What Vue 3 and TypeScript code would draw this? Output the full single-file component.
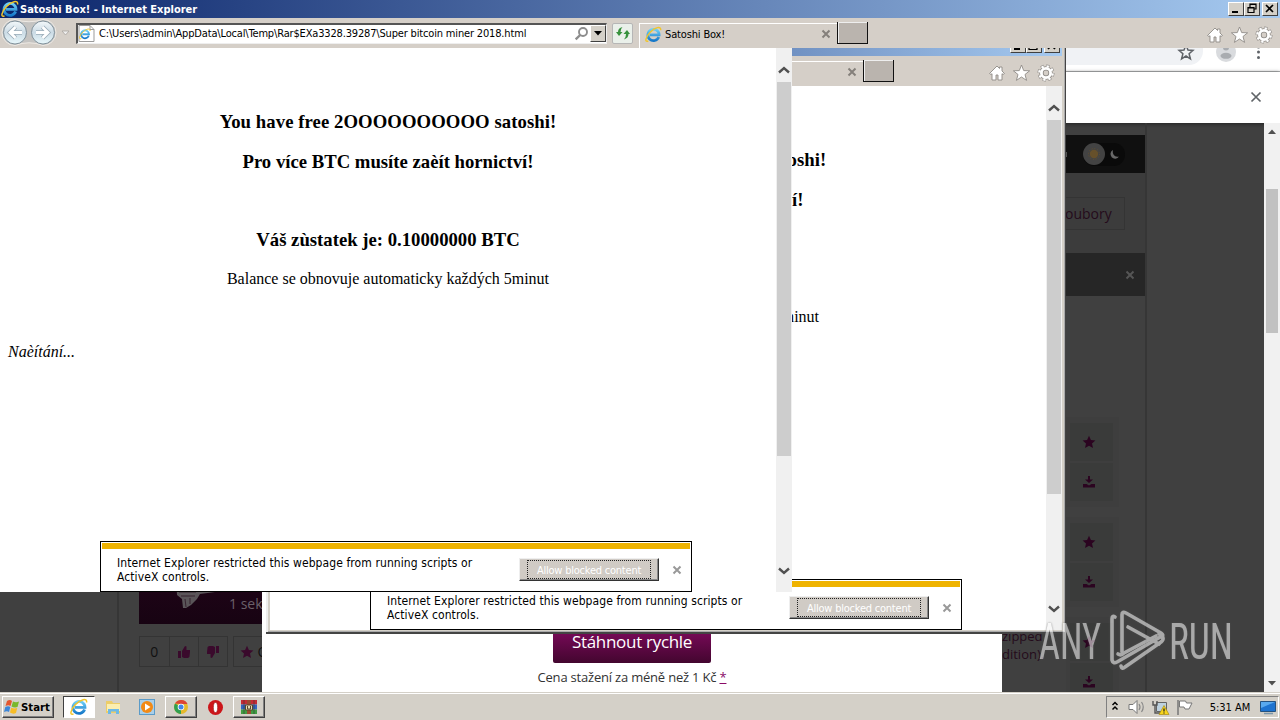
<script setup lang="ts">
interface BrowserWindow {
  id: string
  title: string
  address: string
}

const windows: BrowserWindow[] = [
  { id: 'back', title: '', address: '' },
  {
    id: 'front',
    title: 'Satoshi Box! - Internet Explorer',
    address: 'C:\\Users\\admin\\AppData\\Local\\Temp\\Rar$EXa3328.39287\\Super bitcoin miner 2018.html',
  },
]

const fileRows: number[] = [1, 2, 3]
</script>

<template>
  <div class="desktop">
    <svg class="defs" width="0" height="0">
      <defs>
        <linearGradient id="ieblue" x1="0" y1="0" x2="0" y2="1">
          <stop offset="0" stop-color="#6fd0f7" />
          <stop offset="1" stop-color="#1779c9" />
        </linearGradient>
        <linearGradient id="nav" x1="0" y1="0" x2="0" y2="1">
          <stop offset="0" stop-color="#f4f8fa" />
          <stop offset="0.5" stop-color="#cbdbe5" />
          <stop offset="1" stop-color="#e9f8fc" />
        </linearGradient>
        <symbol id="ie" viewBox="0 0 18 18">
          <path d="M14.6 11.6A6 6 0 1 1 15 9.4H5" fill="none" stroke="url(#ieblue)" stroke-width="2.8" />
          <path d="M3.5 15.8C-.8 18 .6 11.500 5.500 6.500S17.300-.6 16.600 4.500" fill="none" stroke="#f1c52b" stroke-width="1.5" />
        </symbol>
        <symbol id="home" viewBox="0 0 18 18">
          <path d="M1.500 9.500 9 2l2.500 2.500V3h2.500v4l2.500 2.500-1.500 1-1-.8V16h-4v-5H8v5H4V9.700l-1 .8z" fill="#fff" stroke="#8f8b87" stroke-width=".9" />
        </symbol>
        <symbol id="fav" viewBox="0 0 18 18">
          <path d="m9 1 2.200 5.600 5.900.2-4.600 3.700 1.600 5.900L9 13l-5.100 3.400 1.600-5.900L.9 6.800l5.900-.2z" fill="#fff" stroke="#8f8b87" stroke-width=".9" />
        </symbol>
        <symbol id="gear" viewBox="0 0 18 18">
          <circle cx="9" cy="9" r="6.800" fill="none" stroke="#8f8b87" stroke-width="3.400" stroke-dasharray="3.100 2.240" />
          <circle cx="9" cy="9" r="4.600" fill="none" stroke="#8f8b87" stroke-width="4.400" />
          <circle cx="9" cy="9" r="6.700" fill="none" stroke="#fff" stroke-width="2.400" stroke-dasharray="2.300 2.960" stroke-dashoffset="-.4" />
          <circle cx="9" cy="9" r="4.600" fill="none" stroke="#fff" stroke-width="2.800" />
        </symbol>
        <symbol id="star" viewBox="0 0 14 14">
          <path d="m7 .8 1.900 4.200 4.500.5L10 8.500l1 4.500-4-2.300L3 13l1-4.500L.6 5.500 5.100 5z" />
        </symbol>
        <symbol id="download" viewBox="0 0 14 14">
          <path d="M6 1h2v3.500h3L7 8 3 4.500h3zM1 9h3.500L7 10.500 9.500 9H13v3.500H1z" />
        </symbol>
        <symbol id="thumb" viewBox="0 0 14 14">
          <path d="M1 6h3v7H1zM5 6l3-5 1.500.5v3.500H13v2l-.6 5L11 13H7l-2-1z" />
        </symbol>
        <symbol id="cross" viewBox="0 0 10 10">
          <path d="m1.500 1.500 7 7m0-7-7 7" fill="none" stroke="currentColor" stroke-width="2" />
        </symbol>
        <symbol id="chevron" viewBox="0 0 12 8">
          <path d="m1 6.500 5-4.500 5 4.500" fill="none" stroke="#505050" stroke-width="2.400" />
        </symbol>
      </defs>
    </svg>

    <section class="chrome">
      <header class="omni">
        <span class="omni-field"></span>
        <svg class="omni-icons" width="96" height="24" viewBox="0 0 96 24">
          <path d="m16 -3 2 5 5 .4-3.900 3.400 1.300 5L16 8l-4.400 2.800 1.300-5L9 2.400 14 2z" fill="none" stroke="#5f6368" stroke-width="1.500" />
          <circle cx="56" cy="4" r="10" fill="#d9dbde" />
          <circle cx="56" cy="-.5" r="3" fill="#a9acb0" />
          <ellipse cx="56" cy="7.800" rx="5.500" ry="3" fill="#a9acb0" />
          <circle cx="88.500" cy="-1" r="1.500" fill="#5f6368" />
          <circle cx="88.500" cy="4" r="1.500" fill="#5f6368" />
          <circle cx="88.500" cy="9.500" r="1.500" fill="#5f6368" />
        </svg>
      </header>
      <div class="infobar">
        <svg width="12" height="12" viewBox="0 0 12 12"><path d="m1.500 1.500 9 9m0-9-9 9" stroke="#606468" stroke-width="1.700" /></svg>
      </div>
      <div class="viewport">
        <div class="left-col">
          <div class="promo">
            <svg width="50" height="40" viewBox="0 0 50 40"><path d="M2 4h39v14l-15 2-3 5-6 6-5 3H9l-1-9-5-4z" fill="#5a5559" /><path d="M5 18h17m-15 4h14m-10 3 1 8m4-9v6" fill="none" stroke="#35232f" /></svg>
            <span>1 sek</span>
          </div>
          <div class="votes">
            <span class="vote">0</span>
            <span class="vote"><svg width="14" height="14"><use href="#thumb" /></svg></span>
            <span class="vote down"><svg width="14" height="14"><use href="#thumb" /></svg></span>
            <span class="vote fave"><svg width="14" height="14"><use href="#star" /></svg>O</span>
          </div>
        </div>
        <div class="right-col">
          <div class="theme">
            <svg width="79" height="38" viewBox="0 0 79 38">
              <rect x="17" y="8" width="42" height="23" rx="11" fill="#0a0a0a" />
              <path d="M0 17v5" stroke="#555" stroke-width="2" />
              <circle cx="28" cy="19" r="11" fill="#434343" />
              <circle cx="28" cy="19" r="4.200" fill="#66502a" />
              <circle cx="28" cy="19" r="5.400" fill="none" stroke="#66502a" stroke-dasharray="1 1.800" />
              <path d="M47 15a4.600 4.600 0 1 0 6 6.500c-4 1-7-2-6-6.500z" fill="#686868" />
            </svg>
          </div>
          <div class="search"><span>oubory</span></div>
          <div class="banner"><svg width="10" height="10"><use href="#cross" /></svg></div>
          <div class="files">
            <div v-for="row in fileRows" :key="row" class="file">
              <span><svg width="14" height="14"><use href="#star" /></svg></span>
              <span><svg width="14" height="14"><use href="#download" /></svg></span>
            </div>
          </div>
        </div>
        <div class="tail">zipped<br />dition).</div>
        <div class="scroll">
          <svg width="8" height="5"><path d="m0 5 4-4.500L8 5z" fill="#505050" /></svg>
          <i></i>
          <svg width="8" height="5"><path d="m0 0 4 4.500L8 0z" fill="#505050" /></svg>
        </div>
      </div>
      <div class="modal">
        <div class="buy">Stáhnout rychle</div>
        <div class="price"><span>Cena stažení za méně než 1 Kč</span> <b>*</b></div>
      </div>
    </section>

    <section v-for="win in windows" :key="win.id" class="win" :class="win.id">
      <header class="titlebar">
        <svg class="logo" width="18" height="18"><use href="#ie" /></svg>
        <span class="title">{{ win.title }}</span>
        <span class="caption">
          <svg width="12" height="11" viewBox="0 0 12 11"><path d="M3 9h6" stroke="#000" stroke-width="2" /></svg>
        </span>
        <span class="caption">
          <svg v-if="win.id === 'front'" width="12" height="11" viewBox="0 0 12 11"><path d="M5 4V1h6v5H9M5 1.500h6M3 4.500h6v5H3zM3 5h6" fill="none" stroke="#000" stroke-width="1.200" /></svg>
          <svg v-else width="12" height="11" viewBox="0 0 12 11"><path d="M2 1.500h8v8H2zM2 2h8" fill="none" stroke="#000" stroke-width="1.200" /></svg>
        </span>
        <span class="caption close">
          <svg width="12" height="11" viewBox="0 0 12 11"><path d="m3 2 7 7m0-7-7 7" stroke="#000" stroke-width="1.700" /></svg>
        </span>
      </header>
      <div class="toolbar">
        <svg class="nav" width="72" height="30" viewBox="0 0 72 30">
          <path d="M15 1.500Q29 6 43 1.500A13 13 0 0 1 43 27.500Q29 22 15 27.500A13 13 0 0 1 15 1.500" fill="#c5c4c2" stroke="#eeeae5" />
          <circle cx="15" cy="14.500" r="11.500" fill="url(#nav)" stroke="#81919b" />
          <circle cx="43" cy="14.500" r="11.500" fill="url(#nav)" stroke="#81919b" />
          <path d="M22 14.500H10m5.500-5.500L10 14.500l5.500 5.500M36 14.500h12M42.500 9l5.500 5.500-5.500 5.500" fill="none" stroke="#9aacb8" stroke-width="4.400" />
          <path d="M22 14.500H10m5.500-5.500L10 14.500l5.500 5.500M36 14.500h12M42.500 9l5.500 5.500-5.500 5.500" fill="none" stroke="#fff" stroke-width="2.800" />
          <path d="M62 13h7l-3.500 4z" fill="#eee" stroke="#aaa59f" stroke-width=".8" />
        </svg>
        <div class="address">
          <svg width="17" height="17" viewBox="0 0 17 17"><path d="M1 .5h11l4 4v12H1z" fill="#fff" stroke="#9b9b9b" /><path d="M12 .5v4h4" fill="none" stroke="#9b9b9b" /><use href="#ie" x="1" y="3" width="12" height="12" /></svg>
          <span class="url">{{ win.address }}</span>
          <svg class="lens" width="15" height="15" viewBox="0 0 15 15"><circle cx="9" cy="6" r="4" fill="none" stroke="#8d8d8d" stroke-width="1.900" /><path d="m6.200 9-4.500 4.300" stroke="#8d8d8d" stroke-width="2.400" /></svg>
          <span class="drop"><svg width="8" height="5"><path d="M0 0h8L4 4.500z" /></svg></span>
        </div>
        <span class="refresh">
          <svg width="16" height="16" viewBox="0 0 16 16"><path d="M1 7 4 11 7.500 7H5.500q0-3 2-5Q3 3 3 7zM8.500 9 12 5l3 4h-1.500q0 4-4.500 5.500 2-2 2-5.500z" fill="#37923d" /></svg>
        </span>
        <div class="tab">
          <svg width="17" height="17"><use href="#ie" /></svg>
          <span>{{ win.id === 'front' ? 'Satoshi Box!' : '' }}</span>
          <svg class="tab-x" width="10" height="10"><use href="#cross" /></svg>
        </div>
        <span class="newtab"></span>
        <svg class="tools" width="68" height="18" viewBox="0 0 68 18">
          <use href="#home" width="18" height="18" x="0" />
          <use href="#fav" width="18" height="18" x="24.500" />
          <use href="#gear" width="18" height="18" x="49" />
        </svg>
      </div>
      <div class="page">
        <div class="doc">
          <h3 class="offer">You have free 2OOOOOOOOOO satoshi!</h3>
          <h3>Pro více BTC musíte zaèít hornictví!</h3>
          <h3 class="balance">Váš zùstatek je: 0.10000000 BTC</h3>
          <p class="note">Balance se obnovuje automaticky každých 5minut</p>
          <p class="loading">Naèítání...</p>
        </div>
        <div class="bar">
          <svg width="12" height="8"><use href="#chevron" /></svg>
          <i></i>
          <svg class="flip" width="12" height="8"><use href="#chevron" /></svg>
        </div>
        <div class="alert">
          <div class="stripe"></div>
          <div class="alert-row">
            <p>Internet Explorer restricted this webpage from running scripts or<br />ActiveX controls.</p>
            <div class="allow"><span>Allow blocked content</span></div>
            <svg width="10" height="10"><use href="#cross" /></svg>
          </div>
        </div>
      </div>
    </section>

    <footer class="taskbar">
      <div class="start">
        <svg width="16" height="16" viewBox="0 0 16 16">
          <path d="M3 2q3-2 5 0L6.500 7q-2-1.500-5 0z" fill="#e4572e" />
          <path d="M9 2.500q3 1.500 6 0L13.500 8q-3 1-6-.5z" fill="#79b82c" />
          <path d="M1.300 8q3-1.500 5 0L5 13q-2-1.500-5 0z" fill="#3c86d8" />
          <path d="M7.200 8.700q3 1.300 6 .3L12 14q-3 1.500-6-.5z" fill="#f7bd26" />
        </svg>
        <b>Start</b>
      </div>
      <div class="task active"><svg width="18" height="18"><use href="#ie" /></svg></div>
      <div class="task">
        <svg width="18" height="18" viewBox="0 0 18 18"><path d="M2 3h6l1 2h7v10H2z" fill="#eccd68" /><path d="M3 6h13v7H3z" fill="#fbeeb0" /><path d="M4 16v-5h11v5h-3v-2.500H7V16z" fill="#6db9e6" /></svg>
      </div>
      <div class="task">
        <svg width="18" height="18" viewBox="0 0 18 18"><rect x="1.500" y="1.500" width="15" height="15" fill="#a9cfe9" stroke="#5b9bc8" /><circle cx="9" cy="9" r="6" fill="#f28a16" /><path d="m7 5.500 5.500 3.500L7 12.500z" fill="#fff" /></svg>
      </div>
      <div class="task raised">
        <svg width="16" height="16" viewBox="0 0 16 16"><circle cx="8" cy="8" r="7" fill="#e5b92c" /><path d="M8 8 2 4.500A7 7 0 0 0 8 15z" fill="#31a050" /><path d="M2 4.500A7 7 0 0 1 14.500 5H8z" fill="#dc4437" /><circle cx="8" cy="8" r="3.300" fill="#fff" /><circle cx="8" cy="8" r="2.500" fill="#4285e8" /></svg>
      </div>
      <div class="task">
        <svg width="17" height="17" viewBox="0 0 17 17"><circle cx="8.500" cy="8.500" r="7.500" fill="#cc1519" /><ellipse cx="8.500" cy="8.500" rx="2.100" ry="5" fill="#fff" stroke="#8d0a0c" stroke-width=".5" /></svg>
      </div>
      <div class="task raised">
        <svg width="18" height="16" viewBox="0 0 18 16"><path d="M1 1h16v4.500H1z" fill="#c52b34" /><path d="M1 5.500h16v5H1z" fill="#3564bd" /><path d="M1 10.500h16V15H1z" fill="#3f9c42" /><path d="M7 1h4v14H7z" fill="#9c4a31" /><path d="M4 1v14M14 1v14" stroke="#333" stroke-width=".6" /><path d="M5.500 6h7v5h-7z" fill="#e5d9b4" stroke="#59482a" /><path d="M7.500 7v3h3V7" fill="none" stroke="#59482a" /></svg>
      </div>
      <div class="tray">
        <svg width="92" height="20" viewBox="0 0 92 20">
          <path d="m5.500 8 2.500-2.500L10.500 8m-5 4.500L8 10l2.500 2.500" fill="none" stroke="#000" stroke-width="1.500" />
          <path d="M22 7.500h4l4-4v13l-4-4h-4z" fill="#fff" stroke="#777" />
          <path d="M32 7q2 3 0 6M34.500 5q3.500 5 0 10" fill="none" stroke="#888" stroke-width="1.200" />
          <path d="M49.500 5.500h10v9h-10z" fill="#bdd1df" stroke="#636363" /><path d="M46 4v4h4V4M48 8v8h6" fill="none" stroke="#555" stroke-width="1.400" />
          <path d="m57 8.500 5 9H52z" fill="#f8d51b" stroke="#a98b12" stroke-width=".7" /><path d="M57 11.500v3m0 1v1" stroke="#222" stroke-width="1.300" />
          <path d="M71 3v15" stroke="#777" stroke-width="1.500" /><path d="M72.500 4h6l1 2H85l-1.500 3L82 12h-4l-1-2h-4.500z" fill="#fff" stroke="#777" />
        </svg>
        <span class="clock">5:31 AM</span>
        <svg width="16" height="16" viewBox="0 0 16 16"><path d="M.5 2.500h15v10H.5z" fill="#1e73cf" stroke="#25527f" /><path d="M1 3h14L1 9z" fill="#59a9ee" /><path d="M4 14.500h9" stroke="#7b96aa" stroke-width="1.500" /></svg>
      </div>
    </footer>

    <svg class="watermark" width="200" height="70" viewBox="0 0 200 70">
      <g font-family="Roboto, sans-serif" font-size="50" fill="#fff">
        <text x="3" y="54" textLength="62" lengthAdjust="spacingAndGlyphs">ANY</text>
        <text x="133" y="54" textLength="64" lengthAdjust="spacingAndGlyphs">RUN</text>
      </g>
      <g fill="none" stroke="#fff" stroke-width="3.600" stroke-linejoin="round" stroke-linecap="round">
        <path d="M86 47V9.500Q86 6 90 8l35 20q3 2 1 4" />
        <path d="M92 22l31 17M79 12q-3-2-3 2v41q1 4 5 2l45-26" />
        <path d="M123 29q7 4 2 8L89 62q-3 3-4-1M82 49q3 2 6-1l32-17" />
      </g>
    </svg>
  </div>
</template>

<style>
html,
body {
  margin: 0;
  overflow: hidden;
}
</style>

<style scoped>
.desktop {
  position: relative;
  width: 1280px;
  height: 720px;
  overflow: hidden;
  background: #404040;
  font-family: 'DejaVu Sans Condensed', 'DejaVu Sans', sans-serif;
  font-stretch: condensed;
  font-size: 11px;
  color: #000;
}
.desktop * {
  box-sizing: border-box;
}
.defs {
  position: absolute;
}
svg {
  display: block;
  flex: none;
}

/* Background browser */
.chrome {
  position: absolute;
  inset: 0 0 28px 0;
  padding-top: 48px;
  display: flex;
  flex-direction: column;
  font-family: 'Open Sans', 'Noto Sans', sans-serif;
  font-stretch: normal;
}
.omni {
  height: 24px;
  flex: none;
  background: #fff;
  border-bottom: 1px solid #b5b7b9;
  display: flex;
}
.omni-field {
  width: 1203px;
  height: 17px;
  background: #f0f2f5;
  border-radius: 0 0 14px 0;
}
.omni-icons {
  margin-left: -33px;
}
.infobar {
  height: 51px;
  flex: none;
  background: #fff;
  display: flex;
  align-items: center;
  justify-content: flex-end;
  padding: 0 18px 1px 0;
  box-shadow: 0 1px 4px #222;
}
.viewport {
  position: relative;
  flex: 1;
  min-height: 0;
  display: flex;
}
.left-col {
  width: 262px;
  margin-right: 804px;
  flex: none;
  overflow: hidden;
  padding: 437px 0 0 139px;
  background: linear-gradient(90deg, transparent 117px, #363636 117px, #363636 119px, transparent 119px);
}
.promo {
  height: 64px;
  background: linear-gradient(#23051a, #170312);
  display: flex;
  color: #6a6069;
  font-size: 14px;
  white-space: nowrap;
}
.promo svg {
  margin: 14px 5px 0 35px;
}
.promo span {
  padding-top: 34px;
}
.votes {
  display: flex;
  margin-top: 12px;
  width: 180px;
}
.vote {
  width: 29.5px;
  height: 31px;
  border: 1px solid #343434;
  border-right-width: 0;
  display: flex;
  align-items: center;
  justify-content: center;
  font-size: 14px;
  color: #111;
}
.vote svg,
.file svg {
  fill: #2b0420;
}
.vote svg {
  fill: #3a0a2c;
}
.down {
  border-right-width: 1px;
}
.down svg {
  transform: rotate(180deg);
}
.fave {
  width: 70px;
  margin-left: 5px;
  justify-content: flex-start;
  padding-left: 6px;
  gap: 4px;
}
.right-col {
  width: 81px;
  flex: none;
  border-right: 2px solid #363636;
  padding-top: 12px;
}
.theme {
  height: 38px;
  background: #101010;
}
.search {
  height: 80px;
  background: #3c3c3c;
  padding-top: 24px;
}
.search span {
  display: block;
  width: 59px;
  height: 33px;
  border: 1px solid #343434;
  border-left: 0;
  font-size: 14px;
  line-height: 32px;
  color: #240b1b;
  text-indent: -1px;
}
.banner {
  height: 43px;
  background: #262626;
  color: #555;
  display: flex;
  align-items: center;
  justify-content: flex-end;
  padding-right: 10px;
}
.files {
  height: 396px;
  overflow: hidden;
  padding-top: 121px;
}
.file {
  height: 90px;
  width: 53px;
  margin-bottom: 10px;
  background: #3e3e3e;
  padding: 6px 0 0 4px;
  display: flex;
  flex-direction: column;
  gap: 2px;
}
.file span {
  width: 43px;
  height: 38px;
  background: #3a3b3a;
  display: flex;
  align-items: center;
  justify-content: center;
}
.file span svg {
  margin-right: 5px;
}
.tail {
  position: absolute;
  left: 1002px;
  top: 504px;
  font-size: 13px;
  line-height: 18px;
  color: #240b1b;
}
.scroll {
  width: 16px;
  margin-left: auto;
  background: #f1f1f1;
  display: flex;
  flex-direction: column;
  align-items: center;
  padding: 6px 0;
}
.scroll i {
  width: 12px;
  height: 144px;
  margin: 55px 0 auto;
  background: #c1c1c1;
}
.modal {
  position: absolute;
  left: 262px;
  top: 560px;
  width: 740px;
  height: 132px;
  background: #fff;
  display: flex;
  flex-direction: column;
  align-items: center;
  color: #333;
}
.buy {
  width: 158px;
  height: 43px;
  margin-top: 60px;
  border-radius: 2px;
  background: linear-gradient(#8b0a67, #43062f);
  color: #fff;
  font-size: 17px;
  letter-spacing: -0.3px;
  line-height: 44px;
  text-align: center;
  white-space: nowrap;
}
.price {
  font-size: 13px;
  line-height: 18px;
  margin-top: 5px;
  letter-spacing: -0.2px;
}
.price b {
  color: #8a0a67;
  font-weight: normal;
  text-decoration: underline;
}

/* Explorer windows */
.win {
  position: absolute;
  display: flex;
  flex-direction: column;
}
.front {
  left: 0;
  top: 0;
  width: 1280px;
}
.back {
  left: 266px;
  top: 38px;
  width: 800px;
  height: 596px;
  background: #d4d0c8;
  border: solid #444;
  border-width: 0 1px 2px 0;
  box-shadow: inset 2px 0 #eee, inset -1px -1px #aaa;
}
.titlebar {
  height: 18px;
  flex: none;
  display: flex;
  align-items: center;
  padding: 0 2px 0 1px;
  background: linear-gradient(90deg, #0a246a, #a6caf0);
}
.back .titlebar {
  margin: 0 3px 0 4px;
}
.title {
  flex: 1;
  padding-left: 1px;
  color: #fff;
  font-weight: bold;
  white-space: nowrap;
}
.caption {
  width: 16px;
  height: 14px;
  background: #d4d0c8;
  border: 1px solid;
  border-color: #fff #404040 #404040 #fff;
}
.close {
  margin-left: 2px;
}
.back .caption {
  position: relative;
  top: -1px;
}
.toolbar {
  height: 30px;
  flex: none;
  background: #d5cfc8;
  display: flex;
  align-items: center;
}
.back .toolbar {
  margin: 0 3px 0 4px;
}
.address {
  width: 531px;
  height: 21px;
  margin-left: 4px;
  background: #fff;
  border: solid;
  border-color: #555 #eee #eee #555;
  border-width: 2px 1px 1px 2px;
  display: flex;
  align-items: center;
}
.url {
  flex: 1;
  margin-left: 4px;
  white-space: nowrap;
  letter-spacing: -0.165px;
}
.drop {
  width: 16px;
  height: 17px;
  margin-left: 1px;
  background: #d4d0c8;
  border: 1px solid;
  border-color: #fff #404040 #404040 #fff;
  display: grid;
  place-items: center;
}
.refresh {
  width: 21px;
  height: 21px;
  margin-left: 5px;
  border: 1px solid #b6b6b6;
  border-radius: 2px;
  background: #eaf0ea;
  display: grid;
  place-items: center;
}
.tab {
  width: 198px;
  height: 25px;
  margin: 5px 0 0 6px;
  padding: 0 6px 4px 5px;
  border: solid #fff;
  border-width: 1px 0 0 1px;
  display: flex;
  align-items: center;
  gap: 3px;
  white-space: nowrap;
  letter-spacing: -0.15px;
}
.tab-x {
  margin-left: auto;
  color: #85807b;
}
.newtab {
  width: 31px;
  height: 22px;
  background: #bab4ae;
  border: solid #111;
  border-width: 0 1px 1px 1px;
  box-shadow: inset 1px 1px #eee;
}
.tools {
  margin: 4px 6px 0 auto;
}
.back .nav,
.back .address,
.back .refresh {
  display: none;
}
.back .tab {
  width: 593px;
  margin-left: 0;
}

.page {
  position: relative;
  width: 792px;
  height: 544px;
  background: #fff;
  display: flex;
}
.back .page {
  margin-left: 4px;
}
.doc {
  width: 776px;
  padding: 63px 8px 0;
  font-family: 'Liberation Serif', serif;
  font-size: 16px;
  text-align: center;
}
.doc h3 {
  margin: 0 0 19px;
  font-size: 18.72px;
  line-height: 21px;
}
.doc .offer {
  letter-spacing: 0.07px;
}
.doc .balance {
  margin-top: 57px;
}
.doc p {
  margin: 0;
  line-height: 18px;
}
.doc .note {
  margin-top: 20px;
}
.doc .loading {
  margin-top: 55px;
  text-align: left;
  font-style: italic;
}
.bar {
  width: 16px;
  background: #f0f0f0;
  display: flex;
  flex-direction: column;
  align-items: center;
  padding: 18px 0 17px;
}
.bar i {
  width: 14px;
  height: 374px;
  margin: 8px 0 auto;
  background: #cdcdcd;
}
.flip {
  transform: scaleY(-1);
}
.alert {
  position: absolute;
  left: 100px;
  top: 493px;
  width: 592px;
  height: 51px;
  background: #fff;
  border: 1px solid #000;
  padding: 1px;
}
.stripe {
  height: 6px;
  background: #efb300;
}
.alert-row {
  display: flex;
  padding: 7px 8px 0 15px;
}
.alert-row p {
  margin: 0;
  width: 402px;
  font-size: 12px;
  line-height: 14px;
  letter-spacing: 0.09px;
  white-space: nowrap;
}
.alert-row > svg {
  margin: 9px 0 0 13px;
  color: #999;
}
.allow {
  width: 140px;
  height: 23px;
  margin-top: 2px;
  background: #d0cbc5;
  border: 1px solid;
  border-color: #eee #333 #333 #eee;
  box-shadow: inset -1px -1px #888;
  padding: 1px 7px;
}
.allow span {
  display: block;
  height: 19px;
  line-height: 19px;
  letter-spacing: -0.22px;
  border: 1px dotted #222;
  color: #fff;
  text-align: center;
  white-space: nowrap;
}

/* Taskbar */
.taskbar {
  position: absolute;
  left: 0;
  bottom: 0;
  width: 1280px;
  height: 28px;
  background: #d4d0c8;
  box-shadow: inset 0 1px #d4d0c8, inset 0 2px #fff;
  display: flex;
  padding: 4px 1px 2px 2px;
}
.start {
  width: 52px;
  height: 22px;
  margin-right: 9px;
  border: 1px solid;
  border-color: #fff #404040 #404040 #fff;
  box-shadow: inset -1px -1px #808080;
  display: flex;
  align-items: center;
  padding-left: 1px;
  gap: 1px;
  font-size: 11.3px;
}
.task {
  width: 32px;
  height: 22px;
  margin-right: 2px;
  display: grid;
  place-items: center;
}
.raised {
  border: 1px solid;
  border-color: #fff #404040 #404040 #fff;
  box-shadow: inset -1px -1px #808080;
}
.active {
  background: #fff;
  border: 1px solid;
  border-color: #404040 #fff #fff #404040;
}
.tray {
  width: 173px;
  height: 22px;
  margin-left: auto;
  border: 1px solid;
  border-color: #808080 #fff #fff #808080;
  display: flex;
  align-items: center;
}
.clock {
  width: 61px;
  text-align: center;
  white-space: nowrap;
  padding-left: 1px;
}
.watermark {
  position: absolute;
  left: 1036px;
  top: 605px;
  opacity: 0.55;
  filter: drop-shadow(0 0 1px #555);
}
</style>
